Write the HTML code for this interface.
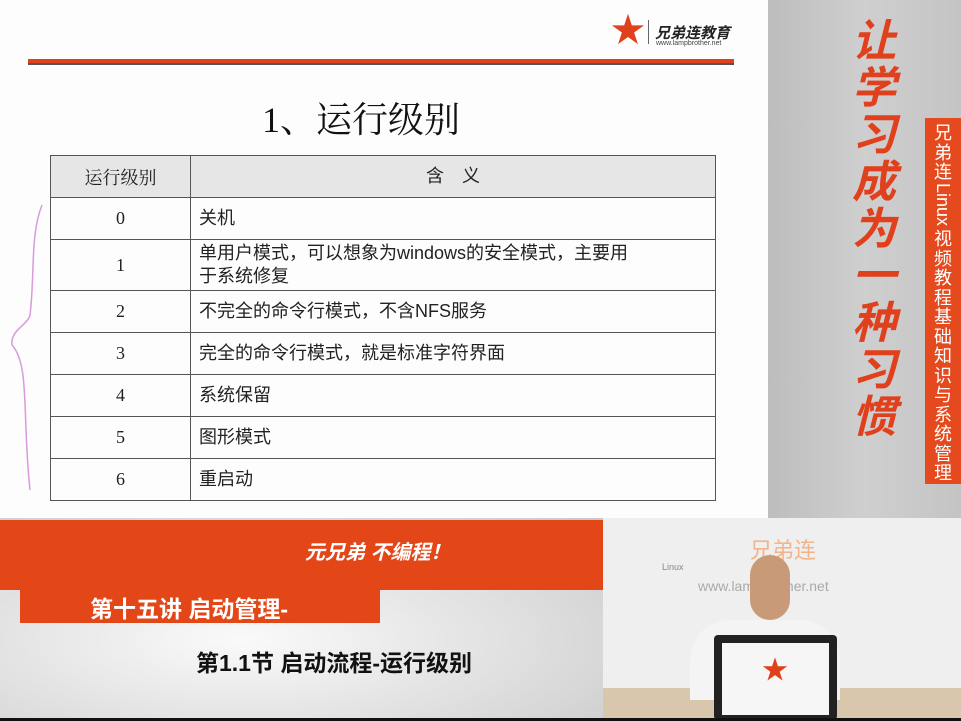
<!DOCTYPE html>
<html><head><meta charset="utf-8"><style>
*{margin:0;padding:0;box-sizing:border-box}
body{width:961px;height:721px;overflow:hidden;position:relative;background:#fff;font-family:"Liberation Sans","Noto Sans CJK SC",sans-serif}
.a{position:absolute}
table{border-collapse:collapse;position:absolute;left:50px;top:155px;width:666px}
td{border:1px solid #555;font-size:18px;color:#222;font-family:"Liberation Serif","Noto Serif CJK SC",serif}
td:first-child{width:140px;text-align:center}
td:last-child{padding-left:8px;padding-right:4px;font-family:"Liberation Sans","Noto Sans CJK SC",sans-serif;line-height:23px}
</style></head><body>
<div class="a" style="left:0;top:0;width:768px;height:520px;background:#fdfdfd"></div>
<div class="a" style="left:768px;top:0;width:193px;height:518px;background:linear-gradient(90deg,#bdbdbd,#cfcfcf 50%,#c4c4c4)"></div>
<div class="a" style="left:611px;top:14px;font-size:34px;color:#e0401c;line-height:34px">★</div>
<div class="a" style="left:648px;top:20px;width:1px;height:24px;background:#666"></div>
<div class="a" style="left:655px;top:22px;font-size:15px;font-style:italic;color:#222;font-weight:bold">兄弟连教育</div>
<div class="a" style="left:656px;top:40px;font-size:7px;color:#444">www.lampbrother.net</div>
<div class="a" style="left:28px;top:59px;width:706px;height:4px;background:#e0401c"></div>
<div class="a" style="left:28px;top:63px;width:706px;height:2px;background:#555"></div>
<div class="a" style="left:262px;top:92px;font-size:36px;color:#111;font-family:'Liberation Serif','Noto Serif CJK SC',serif">1、运行级别</div>
<table>
<tr style="height:42px;background:#e6e6e6"><td>运行级别</td><td style="text-align:center;padding:0">含　义</td></tr>
<tr style="height:42px"><td>0</td><td>关机</td></tr>
<tr style="height:51px"><td>1</td><td>单用户模式，可以想象为windows的安全模式，主要用<br>于系统修复</td></tr>
<tr style="height:42px"><td>2</td><td>不完全的命令行模式，不含NFS服务</td></tr>
<tr style="height:42px"><td>3</td><td>完全的命令行模式，就是标准字符界面</td></tr>
<tr style="height:42px"><td>4</td><td>系统保留</td></tr>
<tr style="height:42px"><td>5</td><td>图形模式</td></tr>
<tr style="height:42px"><td>6</td><td>重启动</td></tr>
</table>
<svg class="a" style="left:0;top:195px" width="50" height="300"><path d="M42 10 C30 40 35 80 30 120 C28 130 10 135 12 150 C30 170 22 220 30 295" stroke="#d89adc" fill="none" stroke-width="1.5"/></svg>
<div class="a" style="left:846px;top:18px;width:56px;font-size:44px;line-height:47px;color:#e0401c;font-weight:bold;font-style:italic;text-align:center">让学习成为一种习惯</div>
<div class="a" style="left:925px;top:118px;width:36px;height:366px;background:#e54a1e"></div>
<div class="a" style="left:929px;top:124px;width:28px;font-size:18px;line-height:19.5px;color:#fff;text-align:center">兄弟连<span style="writing-mode:vertical-rl;display:inline-block;line-height:28px">Linux</span>视频教程 基础知识与系统管理</div>
<div class="a" style="left:0;top:518px;width:603px;height:203px;background:radial-gradient(ellipse at 40% 60%,#fafafa,#d8d8d8 70%,#c8c8c8)"></div>
<div class="a" style="left:0;top:520px;width:603px;height:70px;background:#e34718"></div>
<div class="a" style="left:20px;top:588px;width:360px;height:35px;background:#e34718"></div>
<div class="a" style="left:305px;top:536px;font-size:20px;color:#fff;font-style:italic;font-weight:bold">元兄弟 不编程！</div>
<div class="a" style="left:90px;top:590px;font-size:23px;color:#fff;font-weight:bold">第十五讲 启动管理-</div>
<div class="a" style="left:196px;top:644px;font-size:23px;color:#111;font-weight:bold">第1.1节  启动流程-运行级别</div>
<div class="a" style="left:603px;top:518px;width:358px;height:203px;background:#efefef"></div>
<div class="a" style="left:750px;top:533px;font-size:22px;color:#f2b48a">兄弟连</div>
<div class="a" style="left:662px;top:562px;font-size:9px;color:#888">Linux</div>
<div class="a" style="left:698px;top:578px;font-size:14px;color:#aaa">www.lampbrother.net</div>
<div class="a" style="left:603px;top:688px;width:358px;height:33px;background:#d9c7ad"></div>
<div class="a" style="left:690px;top:620px;width:150px;height:80px;background:#f4f4f4;border-radius:40px 40px 0 0"></div>
<div class="a" style="left:750px;top:555px;width:40px;height:65px;background:#c89a78;border-radius:20px"></div>
<div class="a" style="left:714px;top:635px;width:123px;height:85px;background:#222;border-radius:4px"></div>
<div class="a" style="left:722px;top:643px;width:107px;height:72px;background:#f6f6f6"></div>
<div class="a" style="left:762px;top:650px;font-size:26px;color:#e0401c">★</div>
<div class="a" style="left:0;top:718px;width:961px;height:3px;background:#111"></div>
</body></html>
